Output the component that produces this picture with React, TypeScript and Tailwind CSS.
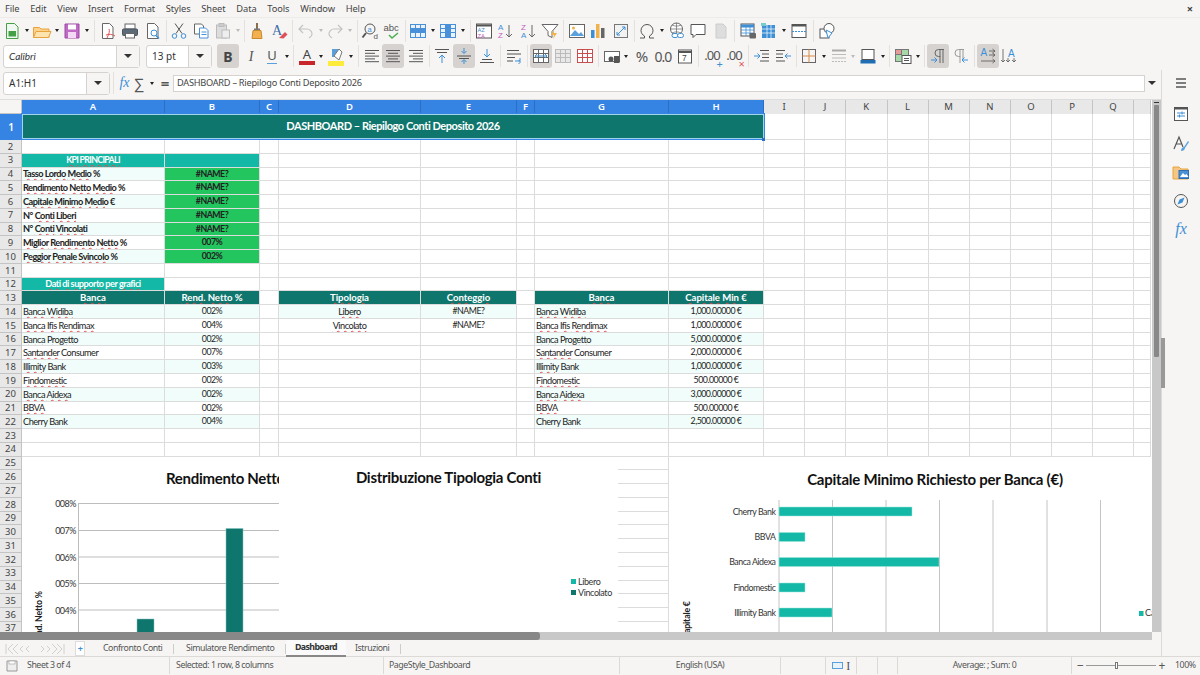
import type { ReactNode } from "react";

const rowGrid =
  "grid grid-cols-[22px_143px_95px_19px_142px_96px_18px_134px_95px_41px_41px_41.5px_41px_41px_41.5px_41px_41px_41px_17px]";

const SPELL = ["Tasso", "Lordo", "Medio", "Rendimento", "Netto", "Capitale", "Minimo", "Conti", "Liberi", "Vincolati", "Miglior", "Peggior", "Penale", "Svincolo", "Banca", "Widiba", "Ifis", "Rendimax", "Progetto", "Santander", "Illimity", "Findomestic", "Aidexa", "BBVA", "Libero", "Vincolato", "KPI", "PRINCIPALI", "Dati", "di", "supporto", "per", "grafici", "Tipologia", "Conteggio", "Rend.", "Min"];

// red squiggle under words the spell checker doesn't know
function Spell({ text }: { text: string }) {
  const words = text.split(" ");
  return (
    <span>
      {words.map((w, i) => (
        <span key={i}>
          {SPELL.includes(w) && text !== "Cherry Bank" ? (
            <span className="underline decoration-wavy decoration-[#e5484d] decoration-[0.6px] underline-offset-[1px]">{w}</span>
          ) : (
            w
          )}
          {i < words.length - 1 ? " " : ""}
        </span>
      ))}
    </span>
  );
}

type CellDef = { t?: string; cls?: string; trk?: string };

function Row({ n, cells = {} }: { n: number; cells?: Record<number, CellDef> }) {
  return (
    <div className={`${rowGrid} h-[13.77px]`}>
      <div className="flex items-center justify-center border-r border-b border-[#c4c4c4] bg-[#e8e8e8] text-[9.5px] leading-none text-[#444] font-['Noto_Sans',sans-serif]">{n}</div>
      {Array.from({ length: 18 }).map((_, i) => (
        <div key={i} className={`flex items-center overflow-hidden whitespace-nowrap border-r border-b border-[#dcdcdc] leading-none text-[#222] ${cells[i]?.trk ?? "text-[9.2px] tracking-[-0.5px]"} ${cells[i]?.cls ?? ""}`}>
          {cells[i]?.t ? <Spell text={cells[i].t as string} /> : null}
        </div>
      ))}
    </div>
  );
}

const kpi: [string, string][] = [
  ["Tasso Lordo Medio %", "#NAME?"],
  ["Rendimento Netto Medio %", "#NAME?"],
  ["Capitale Minimo Medio €", "#NAME?"],
  ["N° Conti Liberi", "#NAME?"],
  ["N° Conti Vincolati", "#NAME?"],
  ["Miglior Rendimento Netto %", "007%"],
  ["Peggior Penale Svincolo %", "002%"],
];

const banks: [string, string, string][] = [
  ["Banca Widiba", "002%", "1,000.00000 €"],
  ["Banca Ifis Rendimax", "004%", "1,000.00000 €"],
  ["Banca Progetto", "002%", "5,000.00000 €"],
  ["Santander Consumer", "007%", "2,000.00000 €"],
  ["Illimity Bank", "003%", "1,000.00000 €"],
  ["Findomestic", "002%", "500.00000 €"],
  ["Banca Aidexa", "002%", "3,000.00000 €"],
  ["BBVA", "002%", "500.00000 €"],
  ["Cherry Bank", "004%", "2,500.00000 €"],
];

const HEAD = "justify-center bg-[#0f766e] text-white font-bold border-[#5f9f99]";
const SUB = "justify-center bg-[#14b8a6] text-white font-bold border-[#5fcabc]";
const HEAD_TRK = "text-[9.6px] tracking-[-0.05px]";
const NUM_TRK = "text-[8.8px] tracking-[-0.5px]";

function rows() {
  const out: ReactNode[] = [];
  out.push(<Row key={2} n={2} />);
  out.push(<Row key={3} n={3} cells={{ 0: { t: "KPI PRINCIPALI", cls: SUB, trk: "text-[8.8px] tracking-[-0.7px]" }, 1: { cls: SUB } }} />);
  kpi.forEach(([a, b], i) => {
    const bg = i % 2 === 0 ? "bg-[#f0fdfa]" : "bg-white";
    out.push(
      <Row key={i + 4} n={i + 4} cells={{ 0: { t: a, cls: `pl-[1px] font-bold ${bg}` }, 1: { t: b, trk: NUM_TRK, cls: "justify-center bg-[#22c55e] font-bold border-[#4fd07e]" } }} />
    );
  });
  out.push(<Row key={11} n={11} />);
  out.push(<Row key={12} n={12} cells={{ 0: { t: "Dati di supporto per grafici", cls: SUB } }} />);
  out.push(
    <Row key={13} n={13} cells={{ 0: { t: "Banca", cls: HEAD, trk: HEAD_TRK }, 1: { t: "Rend. Netto %", cls: HEAD, trk: HEAD_TRK }, 3: { t: "Tipologia", cls: HEAD, trk: HEAD_TRK }, 4: { t: "Conteggio", cls: HEAD, trk: HEAD_TRK }, 6: { t: "Banca", cls: HEAD, trk: HEAD_TRK }, 7: { t: "Capitale Min €", cls: HEAD, trk: HEAD_TRK } }} />
  );
  banks.forEach(([name, rend, cap], i) => {
    const bg = i % 2 === 0 ? "bg-[#f0fdfa]" : "bg-white";
    const cells: Record<number, CellDef> = {
      0: { t: name, cls: `pl-[1px] ${bg}` },
      1: { t: rend, trk: NUM_TRK, cls: `justify-center ${bg}` },
      6: { t: name, cls: `pl-[1px] ${bg}` },
      7: { t: cap, trk: NUM_TRK, cls: `justify-center ${bg}` },
    };
    if (i < 2) {
      cells[3] = { t: i === 0 ? "Libero" : "Vincolato", cls: `justify-center ${bg}` };
      cells[4] = { t: "#NAME?", trk: NUM_TRK, cls: `justify-center ${bg}` };
    }
    out.push(<Row key={i + 14} n={i + 14} cells={cells} />);
  });
  for (let n = 23; n <= 38; n++) out.push(<Row key={n} n={n} />);
  return out;
}

function Ic({ children, w = 20 }: { children: ReactNode; w?: number }) {
  return (
    <svg width={w} height={20} viewBox={`0 0 ${w} 20`} fill="none" strokeWidth="1" stroke="#666">
      {children}
    </svg>
  );
}

function T({ children, on, className = "" }: { children: ReactNode; on?: boolean; className?: string }) {
  return (
    <div className={`flex h-[24px] w-[22px] shrink-0 items-center justify-center rounded-[3px] ${on ? "bg-[#d5d2cf]" : ""} ${className}`}>
      {children}
    </div>
  );
}

function Drop({ light, className = "" }: { light?: boolean; className?: string }) {
  return (
    <div className={`flex h-[24px] w-[8px] shrink-0 items-center justify-center ${className}`}>
      <div className={`h-0 w-0 border-x-[2.5px] border-t-[3px] border-x-transparent ${light ? "border-t-[#bbb]" : "border-t-[#222]"}`} />
    </div>
  );
}

function Sep({ className }: { className: string }) {
  return (
    <div className={`flex h-[22px] shrink-0 justify-center ${className}`}>
      <div className="h-full w-px bg-[#e3e1de]" />
    </div>
  );
}

function Lines({ kind }: { kind: "l" | "c" | "r" }) {
  return (
    <Ic>
      {[0, 1, 2, 3, 4].map((i) => {
        const l = i % 2 ? 10 : 14;
        const x = kind === "l" ? 3 : kind === "r" ? 17 - l : 10 - l / 2;
        return <path key={i} d={`M${x} ${4.5 + i * 2.8}h${l}`} stroke="#555" />;
      })}
    </Ic>
  );
}

function TableIc({ c = "#4a90d9", fill = "#fff", x }: { c?: string; fill?: string; x?: ReactNode }) {
  return (
    <Ic>
      <rect x="2.5" y="3.5" width="15" height="13" fill={fill} stroke={c} />
      <path d="M2.5 7.5h15M2.5 11.5h15M7.5 3.5v13M12.5 3.5v13" stroke={c} />
      {x}
    </Ic>
  );
}

function Toolbar1() {
  return (
    <div className="flex h-[25px] items-center pl-[1px]">
      <T><Ic><path d="M4.5 2.5h8l3.5 3.5v11.5h-11.5z" fill="#f1f8f1" stroke="#43a047" /><rect x="6.5" y="10" width="7.5" height="5.5" fill="#43a047" stroke="none" /></Ic></T>
      <Drop />
      <T><Ic><path d="M1.5 6.5h6l1.5 1.5h8v8.5h-15.5z" fill="#fbd38d" stroke="#e8a33d" /><path d="M1.5 16.5l2.5-6h15l-2.5 6z" fill="#fde3ae" stroke="#e8a33d" /></Ic></T>
      <Drop />
      <T><Ic><path d="M3 3h14v14h-14z" fill="#bf6bc4" stroke="#9c4aa3" /><rect x="6" y="3.5" width="8" height="5" fill="#fff" stroke="none" /><rect x="6" y="11" width="8" height="6" fill="#f3d9f5" stroke="none" /></Ic></T>
      <Drop />
      <Sep className="w-[6px]" />
      <T><Ic><path d="M4.5 2.5h7l3.5 3.5v11.5h-10.5z" fill="#fff" stroke="#666" /><path d="M9 17c2-4 3-7 2-9M8 14c3-1 6-1 9 1" stroke="#e05555" /></Ic></T>
      <T><Ic><rect x="5" y="3" width="10" height="5" fill="#fff" /><rect x="2.5" y="8" width="15" height="6.5" rx="1" fill="#5d6b78" stroke="#4a5560" /><rect x="5.5" y="12.5" width="9" height="4.5" fill="#fff" /></Ic></T>
      <T className="ml-px"><Ic><path d="M4.5 2.5h7l3.5 3.5v11.5h-10.5z" fill="#fff" stroke="#666" /><circle cx="11" cy="12" r="3" fill="#fff" stroke="#3d8fd6" /><path d="M13 14.5l3 3" stroke="#3d8fd6" strokeWidth="1.5" /></Ic></T>
      <Sep className="w-[4px]" />
      <T><Ic><path d="M6 2.5l7 10M14 2.5l-7 10" stroke="#555" /><circle cx="5.5" cy="15" r="2.3" stroke="#3d8fd6" /><circle cx="14.5" cy="15" r="2.3" stroke="#3d8fd6" /></Ic></T>
      <T><Ic><path d="M3.5 3h7l2 2v8h-9z" fill="#fff" stroke="#666" /><path d="M8.5 7h6l2.5 2.5v7.5h-8.5z" fill="#fff" stroke="#4a90d9" /><path d="M10.5 11h5M10.5 13.5h5" stroke="#4a90d9" /></Ic></T>
      <T><Ic><rect x="3.5" y="4" width="10" height="13" fill="#ddd" stroke="#bbb" /><rect x="6" y="2.5" width="5" height="3" fill="#ccc" stroke="#bbb" /><rect x="9" y="9" width="7.5" height="8" fill="#eee" stroke="#bbb" /></Ic></T>
      <Drop light />
      <Sep className="w-[4px]" />
      <T><Ic><path d="M10 2v6" stroke="#8a6d4b" strokeWidth="2" /><rect x="7" y="7.5" width="6" height="2" fill="#777" stroke="none" /><path d="M6 9.5h8l1 8h-10z" fill="#f2b04e" stroke="#c98a2e" /></Ic></T>
      <T><Ic><text x="3" y="14" fontSize="14" fill="#3c6ea8" stroke="none" fontFamily="Liberation Serif">A</text><path d="M10 17l6-6 2.5 2.5-4 4z" fill="#e0505a" stroke="none" /></Ic></T>
      <Sep className="w-[5px]" />
      <T><Ic><path d="M7 4L3 8l4 4M3 8h8c3 0 5 2.5 5 5s-1.5 3-3 4" stroke="#c4c4c4" strokeWidth="1.2" /></Ic></T>
      <Drop light />
      <T className="-ml-px"><Ic><path d="M13 4l4 4-4 4M17 8H9c-3 0-5 2.5-5 5s1.5 3 3 4" stroke="#c4c4c4" strokeWidth="1.2" /></Ic></T>
      <Drop light />
      <Sep className="w-[6px]" />
      <T><Ic><circle cx="9" cy="8" r="5" stroke="#555" /><path d="M5 12l-3.5 4.5" stroke="#555" strokeWidth="2" /><text x="6.5" y="10.5" fontSize="7.5" fill="#3d8fd6" stroke="none" fontFamily="Liberation Sans">a</text><text x="12.5" y="18" fontSize="8" fill="#555" stroke="none" fontFamily="Liberation Sans">d</text></Ic></T>
      <T><Ic><text x="0.5" y="10" fontSize="9.5" fill="#555" stroke="none" fontFamily="Liberation Sans">abc</text><path d="M6 14l3 3 6-5" stroke="#4caf50" strokeWidth="1.5" /></Ic></T>
      <Sep className="w-[3px]" />
      <T><TableIc fill="#eaf3fb" x={<rect x="2.5" y="7.5" width="15" height="4" fill="#4a90d9" stroke="none" />} /></T>
      <Drop />
      <T><TableIc fill="#eaf3fb" x={<rect x="7.5" y="3.5" width="5" height="13" fill="#4a90d9" stroke="none" />} /></T>
      <Drop />
      <Sep className="w-[6px]" />
      <T><Ic><rect x="2.5" y="3" width="15" height="14" fill="#fff" stroke="#555" /><path d="M2.5 4.5h15" stroke="#555" strokeWidth="2" /><text x="3.5" y="11" fontSize="6" fill="#3d8fd6" stroke="none">AZ</text><text x="3.5" y="16.5" fontSize="6" fill="#c060c0" stroke="none">ZA</text></Ic></T>
      <T className="-ml-px"><Ic><text x="3" y="9" fontSize="8" fill="#3d8fd6" stroke="none" fontFamily="Liberation Sans">A</text><text x="3" y="17" fontSize="8" fill="#c060c0" stroke="none" fontFamily="Liberation Sans">Z</text><path d="M14 4v12M11 13l3 3 3-3" stroke="#666" /></Ic></T>
      <T className="ml-px"><Ic><text x="3" y="9" fontSize="8" fill="#c060c0" stroke="none" fontFamily="Liberation Sans">Z</text><text x="3" y="17" fontSize="8" fill="#3d8fd6" stroke="none" fontFamily="Liberation Sans">A</text><path d="M14 4v12M11 13l3 3 3-3" stroke="#666" /></Ic></T>
      <T><Ic><path d="M2 3.5h16l-6 7v6l-4-2v-4z" fill="#fff" stroke="#666" /><path d="M14 9l-3 5h3l-1 4 4-6h-3z" fill="#f0b24a" stroke="none" /></Ic></T>
      <Sep className="w-[5px]" />
      <T><Ic><rect x="2.5" y="3.5" width="15" height="13" fill="#fff" stroke="#666" /><path d="M3 15l5-6 4 4 2-2 3 4z" fill="#5aa0dc" stroke="none" /><circle cx="6.5" cy="7" r="1.5" fill="#f0b24a" stroke="none" /></Ic></T>
      <T className="-ml-px"><Ic><rect x="3" y="9" width="3.5" height="8" fill="#3d8fd6" stroke="none" /><rect x="8" y="3" width="3.5" height="14" fill="#f0b24a" stroke="none" /><rect x="13" y="7" width="3.5" height="10" fill="#666" stroke="none" /></Ic></T>
      <T className="ml-px"><Ic><rect x="3.5" y="3.5" width="13" height="13" fill="#f2f2f2" stroke="#777" /><path d="M6 14l8-8M11 6h3v3M6 11v3h3" stroke="#3d8fd6" /></Ic></T>
      <Sep className="w-[4px]" />
      <T><Ic><path d="M3 17h4.5v-2c-2-1-3.500-3-3.500-5.500a6 6 0 0 1 12 0c0 2.500-1.500 4.500-3.500 5.500v2H17" stroke="#555" /></Ic></T>
      <Drop />
      <T><Ic><circle cx="9.5" cy="8" r="6" fill="#fff" stroke="#666" /><path d="M3.5 8h12M9.5 2v12M5 4c3 1.5 6 1.5 9 0M5 12c3-1.5 6-1.5 9 0" stroke="#666" strokeWidth=".7" /><rect x="5" y="12.5" width="6" height="4" rx="2" fill="#fff" stroke="#3d8fd6" /><rect x="10.5" y="12.5" width="6" height="4" rx="2" fill="#fff" stroke="#3d8fd6" /></Ic></T>
      <T className="-ml-px"><Ic><path d="M3 3.5h14v10H8l-3 3v-3H3z" fill="#fff" stroke="#555" /></Ic></T>
      <T className="ml-px"><Ic><path d="M5 3h7l3 3v11H5z" fill="#ddd" stroke="#ccc" /></Ic></T>
      <Sep className="w-[5px]" />
      <T><Ic><rect x="3" y="3" width="13" height="12" fill="#fff" stroke="#555" /><path d="M3 5h13" stroke="#3d8fd6" strokeWidth="3" /><path d="M3 9h13M3 12h13M8 5v10M12 5v10" stroke="#3d8fd6" strokeWidth=".8" /><rect x="11.5" y="12" width="6.5" height="5.5" rx="1" fill="#666" stroke="none" /></Ic></T>
      <T className="-ml-px"><Ic><rect x="3" y="4" width="13" height="13" fill="#3d8fd6" stroke="none" /><path d="M3 8h13M3 12h13M8 4v13M12 4v13" stroke="#fff" strokeWidth=".7" /><rect x="2" y="2" width="5" height="3" fill="#7cc" stroke="none" /></Ic></T>
      <Drop />
      <T><Ic><rect x="3" y="3.5" width="14" height="13" fill="#fff" stroke="#555" /><path d="M3 4.5h14" stroke="#555" strokeWidth="2" /><path d="M3 10.5h14" stroke="#3d8fd6" strokeDasharray="2 1" /></Ic></T>
      <Sep className="w-[6px]" />
      <T><Ic><rect x="3" y="8" width="9" height="9" fill="#fff" stroke="#555" /><circle cx="12" cy="7.5" r="5" fill="#fff" stroke="#555" /><path d="M9 9l6 3-4 5z" fill="#fff" stroke="#3d8fd6" /></Ic></T>
    </div>
  );
}

function Combo({ className, text, italic }: { className: string; text: string; italic?: boolean }) {
  return (
    <div className={`flex h-[23px] shrink-0 rounded-[3px] border border-[#d5d2cf] bg-white ${className}`}>
      <div className={`flex-1 pl-[5px] text-[10px] leading-[21px] text-[#333] ${italic ? "italic font-['Lato',sans-serif]" : ""}`}>{text}</div>
      <div className="flex w-[23px] items-center justify-center border-l border-[#d5d2cf] bg-[#f6f5f4]">
        <div className="h-0 w-0 border-x-[4px] border-t-[4px] border-x-transparent border-t-[#333]" />
      </div>
    </div>
  );
}

function Toolbar2() {
  return (
    <div className="flex h-[26px] items-center pl-[3px]">
      <Combo className="w-[137px]" text="Calibri" italic />
      <Combo className="ml-[6px] w-[66px]" text="13 pt" />
      <T on className="ml-[5px]"><span className="text-[14px] font-bold text-[#444]">B</span></T>
      <T className="ml-px"><span className="text-[14px] italic text-[#555] font-['Liberation_Serif',serif]">I</span></T>
      <T className="-ml-px"><span className="border-b border-[#5aa0dc] text-[13px] leading-[15px] text-[#555]">U</span></T>
      <Drop />
      <Sep className="w-[5px]" />
      <T><div className="flex flex-col items-center leading-none"><span className="text-[13px] leading-[12px] text-[#444]">A</span><div className="mt-px h-[4px] w-[16px] bg-[#c9262c]" /></div></T>
      <Drop className="-ml-px" />
      <T><div className="flex flex-col items-center"><Ic w={16}><path d="M4 3h8v8H4z" fill="#5a9fd8" stroke="none" /><path d="M6 10l5-7 3 3-3 8z" fill="#fff" stroke="#777" /></Ic><div className="-mt-[5px] h-[5px] w-[16px] bg-[#ffeb3b]" /></div></T>
      <Drop />
      <Sep className="w-[6px]" />
      <T><Lines kind="l" /></T>
      <T on className="-ml-px"><Lines kind="c" /></T>
      <T className="ml-px"><Lines kind="r" /></T>
      <Sep className="w-[4px]" />
      <T><Ic><path d="M3 3.5h14M5 6.5h10" stroke="#555" /><path d="M10 17V9M7 12l3-3 3 3" stroke="#3d8fd6" /></Ic></T>
      <T on><Ic><path d="M3 10h14M5 12.5h10" stroke="#555" /><path d="M10 2v5M7.5 5l2.5 2.5L12.5 5M10 18v-4M7.5 16l2.5-2.5 2.5 2.5" stroke="#3d8fd6" /></Ic></T>
      <T className="ml-px"><Ic><path d="M3 16.5h14M5 13.5h10" stroke="#555" /><path d="M10 3v8M7 8l3 3 3-3" stroke="#3d8fd6" /></Ic></T>
      <Sep className="w-[5px]" />
      <T><Ic><path d="M3 4.5h12M3 8h14M3 11.5h8M3 15h6" stroke="#555" /><path d="M11 15h5v-3M14.5 14l2 2-2 2" stroke="#3d8fd6" /></Ic></T>
      <Sep className="w-[5px]" />
      <T on><TableIc c="#666" x={<path d="M4 10h12M6 8l-2 2 2 2M14 8l2 2-2 2" stroke="#3d8fd6" />} /></T>
      <T><TableIc c="#bbb" fill="#e8e8e8" /></T>
      <T><TableIc c="#c94f4f" /></T>
      <Sep className="w-[5px]" />
      <T><Ic><rect x="2.5" y="5.5" width="15" height="10" fill="#fff" stroke="#666" /><circle cx="9" cy="13" r="2.5" fill="#555" stroke="none" /><rect x="12" y="10" width="5.5" height="7" fill="#555" stroke="none" /></Ic></T>
      <Drop className="-ml-px" />
      <T className="ml-px"><span className="text-[15px] text-[#555]">%</span></T>
      <T className="-ml-px"><span className="text-[14px] tracking-[-1px] text-[#555]">0.0</span></T>
      <T><Ic><rect x="3.5" y="4" width="13" height="13" fill="#fff" stroke="#555" /><path d="M3.5 6h13" stroke="#555" strokeWidth="2" /><text x="7" y="15" fontSize="8.5" fill="#444" stroke="none" fontFamily="Liberation Sans">7</text></Ic></T>
      <Sep className="w-[5px]" />
      <T><span className="relative text-[13px] tracking-[-1px] text-[#555]">.00<span className="absolute -bottom-[3px] -right-[2px] text-[11px] leading-none text-[#3d8fd6]">+</span></span></T>
      <T><span className="relative text-[13px] tracking-[-1px] text-[#555]">.00<span className="absolute -bottom-[3px] -right-[2px] text-[11px] leading-none text-[#e05555]">×</span></span></T>
      <Sep className="w-[6px]" />
      <T><Ic><path d="M8 4.5h9M10 8h7M10 11.5h7M8 15h9" stroke="#555" /><path d="M2 10h6M5.5 7.5L8 10l-2.5 2.5" stroke="#3d8fd6" /></Ic></T>
      <T className="-ml-px"><Ic><path d="M3 4.5h9M3 8h7M3 11.5h7M3 15h9" stroke="#555" /><path d="M18 10h-6M14.5 7.5L12 10l2.5 2.5" stroke="#3d8fd6" /></Ic></T>
      <Sep className="w-[4px]" />
      <T><Ic><rect x="3.5" y="3.5" width="13" height="13" stroke="#666" /><path d="M3.5 10h13M10 3.5v13" stroke="#d98a4a" /></Ic></T>
      <Drop />
      <T><Ic><path d="M3 4.5h14" stroke="#aaa" strokeWidth="2" /><path d="M3 8.5h14M3 12h14" stroke="#bbb" /><path d="M3 15.5h14" stroke="#bbb" strokeDasharray="2 1" /></Ic></T>
      <Drop light className="-ml-px" />
      <T><Ic><rect x="4" y="3.5" width="12" height="10" fill="#fff" stroke="#555" /><rect x="2.5" y="14" width="15" height="3.5" fill="#1f6db3" stroke="none" /></Ic></T>
      <Drop />
      <Sep className="w-[5px]" />
      <T><Ic><rect x="2.5" y="3.5" width="13" height="12" fill="#a6d8a8" stroke="#777" /><rect x="2.5" y="3.5" width="6" height="5" fill="#e89a9a" stroke="#777" /><rect x="9" y="9.5" width="9" height="8" fill="#fff" stroke="#555" /><path d="M11 12.5h5M11 14.5h5" stroke="#555" /></Ic></T>
      <Drop />
      <Sep className="w-[5px]" />
      <T on><Ic><path d="M16 3.5H10.5a3.5 3.5 0 0 0 0 7H12V3.5M12 10v7M15 3.5V17" stroke="#666" /><path d="M3 14h6M6.5 11.5L9 14l-2.5 2.5" stroke="#3d8fd6" /></Ic></T>
      <T><Ic><path d="M14 3.5H8.5a3.5 3.5 0 0 0 0 7H10V3.5M10 10v7M13 3.5V13" stroke="#999" /><path d="M18 14h-6M14.5 11.5L12 14l2.5 2.5" stroke="#3d8fd6" /></Ic></T>
      <Sep className="w-[6px]" />
      <T on><Ic><text x="2.5" y="10" fontSize="10" fill="#3d8fd6" stroke="none" fontFamily="Liberation Sans">A</text><path d="M11 5h6M14.5 3l2.5 2-2.5 2M11 9h6M14.5 7l2.5 2-2.5 2M3 15h14M14.5 13l2.5 2-2.5 2" stroke="#555" strokeWidth=".8" /></Ic></T>
      <T className="-ml-px"><Ic><text x="9" y="11" fontSize="10" fill="#3d8fd6" stroke="none" fontFamily="Liberation Sans">A</text><path d="M4 3v13M2 14l2 2 2-2M9 12v4M7 14l2 2 2-2M15 12v4M13 14l2 2 2-2" stroke="#555" strokeWidth=".8" /></Ic></T>
    </div>
  );
}

function FormulaBar() {
  return (
    <div className="flex h-[26px] items-center pl-[3px] pr-[2px]">
      <Combo className="w-[107px]" text="A1:H1" />
      <Sep className="w-[7px]" />
      <span className="w-[15px] shrink-0 text-center text-[14px] italic leading-none text-[#3d8fd6] font-['Liberation_Serif',serif]">fx</span>
      <span className="w-[14px] shrink-0 text-center text-[15px] leading-none text-[#555]">∑</span>
      <Drop className="ml-[2px]" />
      <span className="ml-[2px] w-[14px] shrink-0 text-center text-[15px] font-bold leading-none text-[#555]">=</span>
      <div className="ml-px flex h-[17px] flex-1 items-center border border-[#d5d2cf] bg-white pl-[3px] text-[9.2px] tracking-[-0.25px] text-[#444]">DASHBOARD – Riepilogo Conti Deposito 2026</div>
      <div className="flex w-[14px] shrink-0 justify-center"><div className="h-0 w-0 border-x-[4px] border-t-[4px] border-x-transparent border-t-[#333]" /></div>
    </div>
  );
}

const cols = ["A", "B", "C", "D", "E", "F", "G", "H", "I", "J", "K", "L", "M", "N", "O", "P", "Q", ""];

const chartFont = "Lato, 'Liberation Sans', sans-serif";

function ChartRend() {
  return (
    <svg className="absolute left-[22px] top-[357px]" width="257" height="175" viewBox="22 457 257 175">
      <rect x="22" y="457" width="257" height="175" fill="#fff" />
      <text x="166" y="484" fontSize="15" letterSpacing="-0.3" fontWeight="700" fill="#111" fontFamily={chartFont}>Rendimento Netto</text>
      {[503.5, 530.5, 557, 583.5, 610].map((y) => (
        <path key={y} d={`M78.5 ${y}H279`} stroke="#bdbdbd" />
      ))}
      <path d="M78.5 503V632" stroke="#bdbdbd" />
      {["008%", "007%", "006%", "005%", "004%"].map((t, i) => (
        <text key={t} x="76" y={[507, 534, 560.5, 587, 613.5][i]} textAnchor="end" fontSize="9" letterSpacing="-0.5" fill="#333" fontFamily={chartFont}>{t}</text>
      ))}
      <rect x="137" y="619" width="17" height="14" fill="#0f766e" stroke="#7fc4bc" strokeWidth=".5" />
      <rect x="226" y="528.5" width="17" height="104" fill="#0f766e" stroke="#7fc4bc" strokeWidth=".5" />
      <text transform="translate(42 632) rotate(-90)" x="-13" fontSize="8.8" letterSpacing="-0.2" fontWeight="700" fill="#222" fontFamily={chartFont}>Rend. Netto %</text>
    </svg>
  );
}

function ChartDist() {
  return (
    <svg className="absolute left-[279px] top-[357px]" width="339" height="175" viewBox="279 457 339 175">
      <rect x="279" y="457" width="339" height="175" fill="#fff" />
      <text x="448.5" y="483" textAnchor="middle" fontSize="15" letterSpacing="-0.3" fontWeight="700" fill="#111" fontFamily={chartFont}>Distribuzione Tipologia Conti</text>
      <rect x="571" y="579" width="5" height="5" fill="#14b8a6" />
      <rect x="571" y="590" width="5" height="5" fill="#0f766e" />
      <text x="578" y="584.5" fontSize="9" letterSpacing="-0.4" fill="#333" fontFamily={chartFont}>Libero</text>
      <text x="578" y="595.5" fontSize="9" letterSpacing="-0.4" fill="#333" fontFamily={chartFont}>Vincolato</text>
    </svg>
  );
}

function ChartCap() {
  const bars: [string, number, number][] = [
    ["Cherry Bank", 511.5, 912],
    ["BBVA", 537, 805],
    ["Banca Aidexa", 562, 939],
    ["Findomestic", 587.5, 805],
    ["Illimity Bank", 612.5, 832],
  ];
  return (
    <svg className="absolute left-[669px] top-[357px]" width="483" height="175" viewBox="669 457 483 175">
      <rect x="669" y="457" width="483" height="175" fill="#fff" />
      <text x="935" y="484.5" textAnchor="middle" fontSize="15" letterSpacing="-0.25" fontWeight="700" fill="#111" fontFamily={chartFont}>Capitale Minimo Richiesto per Banca (€)</text>
      {[779, 832.5, 886, 939.5, 993, 1047, 1100.5].map((x) => (
        <path key={x} d={`M${x} 500V632`} stroke="#c4c4c4" />
      ))}
      {bars.map(([name, y, end]) => (
        <g key={name}>
          <rect x="779" y={y - 4.5} width={end - 779} height="9" fill="#14b8a6" stroke="#9be8dc" strokeWidth=".5" />
          <text x="775.5" y={y + 3} textAnchor="end" fontSize="8.8" letterSpacing="-0.45" fill="#333" fontFamily={chartFont}>{name}</text>
        </g>
      ))}
      <text transform="translate(690 632) rotate(-90)" fontSize="8.8" letterSpacing="-0.2" fontWeight="700" fill="#222" x="-1" fontFamily={chartFont}>apitale €</text>
      <rect x="1139" y="611" width="4.5" height="5" fill="#14b8a6" />
      <text x="1145" y="616" fontSize="9" fill="#333" fontFamily={chartFont}>Ca</text>
    </svg>
  );
}

function Sheet() {
  return (
    <div className="mt-[3px] flex h-[533px] border-t border-[#ddd]">
      <div className="relative w-[1152px] overflow-hidden bg-white font-['Lato',sans-serif]">
        <div className={`${rowGrid} h-[14px]`}>
          <div className="border-r border-b border-[#c4c4c4] bg-[#f6f5f4]" />
          {cols.map((c, i) => (
            <div key={i} className={`flex items-center justify-center border-r text-[9.5px] font-['Noto_Sans',sans-serif] ${i < 8 ? "border-[#2a6fc4] bg-[#3584e4] font-semibold text-white" : "border-[#c4c4c4] bg-[#e8e8e8] text-[#444]"}`}>{c}</div>
          ))}
        </div>
        <div className={`${rowGrid} h-[26px]`}>
          <div className="flex items-center justify-center bg-[#3584e4] text-[10px] font-semibold text-white font-['Noto_Sans',sans-serif]">1</div>
          <div className="col-span-8 mb-px flex items-center justify-center border border-[#9fd4ea] bg-[#0f766e] text-[11px] font-bold tracking-[-0.44px] text-white outline outline-1 outline-[#3584e4]">DASHBOARD – Riepilogo Conti Deposito 2026</div>
          {Array.from({ length: 10 }).map((_, i) => (
            <div key={i} className="border-r border-b border-[#dcdcdc]" />
          ))}
        </div>
        {rows()}
        <div className="absolute left-[762px] top-[38px] h-[3px] w-[3px] bg-[#2a6fc4]" />
        <ChartRend />
        <ChartDist />
        <ChartCap />
      </div>
      <div className="w-[9px] bg-[#c8c8c8] px-[2px] pt-[2px]">
        <div className="h-px w-[5px] bg-[#333]" />
        <div className="mt-[2px] h-[252px] w-[5px] rounded-[1px] bg-[#888]" />
      </div>
    </div>
  );
}

function Sidebar() {
  return (
    <div className="relative flex w-[39px] flex-col items-center border-l border-[#dcdad7] pt-[3px]">
      <div className="absolute -left-px top-[268px] h-[50px] w-[4px] bg-[#999]" />
      <svg width="20" height="20" viewBox="0 0 20 20"><path d="M5 6h10M5 10h10M5 14h10" stroke="#555" strokeWidth="1.3" /></svg>
      <svg width="20" height="20" viewBox="0 0 20 20" className="mt-[11px]"><rect x="3.5" y="3.5" width="13" height="13" fill="#fff" stroke="#555" /><path d="M3.5 4.5h13" stroke="#555" strokeWidth="2" /><path d="M6 9h8M6 12h8M11 7.5v3M8.5 10.5v3" stroke="#3d8fd6" /></svg>
      <svg width="20" height="20" viewBox="0 0 20 20" className="mt-[10px]"><path d="M3 15L8 3l4 10M5 10h6" stroke="#555" fill="none" strokeWidth="1.2" /><path d="M10 17c0-3 2-4 3-4l4-6 1 1-4 6c0 2-2 3-4 3z" fill="#5aa0dc" /></svg>
      <svg width="20" height="20" viewBox="0 0 20 20" className="mt-[8px]"><path d="M2 5h6l2 2h7v10H2z" fill="#f5c684" stroke="#e8a33d" /><rect x="8" y="8.5" width="9.5" height="8" fill="#4a90d9" stroke="#2f6fb0" /><path d="M9 15l3-4 2 2 1.5-1 2 3z" fill="#fff" /></svg>
      <svg width="20" height="20" viewBox="0 0 20 20" className="mt-[9px]"><circle cx="10" cy="10" r="6.5" fill="none" stroke="#555" /><path d="M13.5 6.5L11.5 11.5 6.5 13.5 8.5 8.5z" fill="#3d8fd6" /></svg>
      <span className="mt-[10px] text-[16px] italic leading-none text-[#3d8fd6] font-['Liberation_Serif',serif]">fx</span>
    </div>
  );
}

function TabBar() {
  return (
    <div className="flex h-[17px] items-center whitespace-nowrap text-[8.8px] tracking-[-0.45px] text-[#555]">
      <svg className="ml-[5px]" width="60" height="14" viewBox="0 0 60 14" fill="none" stroke="#d0d0d0">
        <path d="M1 2v10M8 2L3 7l5 5M13 2L8 7l5 5M18 4l-3 3 3 3M24 4l-3 3 3 3M36 4l3 3-3 3M42 4l3 3-3 3M47 2l5 5-5 5M52 2l5 5-5 5M59 2v10" />
      </svg>
      <div className="ml-[10px] flex h-[15px] w-[10px] items-center justify-center border border-[#ddd] bg-white text-[9px] font-bold leading-none text-[#3d8fd6]">+</div>
      <div className="ml-[18px] w-[58px]">Confronto Conti</div>
      <div className="ml-[12px] h-[10px] w-px bg-[#ccc]" />
      <div className="ml-[12px] w-[87px]">Simulatore Rendimento</div>
      <div className="ml-[12px] h-[10px] w-px bg-[#ccc]" />
      <div className="flex h-full w-[60px] items-center justify-center border-b-2 border-[#888] bg-[#fafafa] font-bold tracking-[-0.6px] text-[#333]">Dashboard</div>
      <div className="ml-[9px] w-[35px]">Istruzioni</div>
      <div className="ml-[10px] h-[10px] w-px bg-[#ccc]" />
    </div>
  );
}

function StatusCell({ className, children }: { className: string; children?: ReactNode }) {
  return <div className={`flex h-full shrink-0 items-center border-r border-[#dcdad7] ${className}`}>{children}</div>;
}

function StatusBar() {
  return (
    <div className="flex h-[18px] items-center border-t border-[#dcdad7] text-[8.8px] tracking-[-0.45px] text-[#555]">
      <StatusCell className="w-[170px] pl-[6px]">
        <svg width="12" height="12" viewBox="0 0 12 12"><path d="M1 1h10v10H1z" fill="#eee" stroke="#999" /><rect x="3" y="1" width="6" height="3" fill="#fff" stroke="#999" strokeWidth=".6" /></svg>
        <span className="ml-[9px]">Sheet 3 of 4</span>
      </StatusCell>
      <StatusCell className="w-[214px] pl-[6px]">Selected: 1 row, 8 columns</StatusCell>
      <StatusCell className="w-[236px] pl-[5px]">PageStyle_Dashboard</StatusCell>
      <StatusCell className="w-[161px] justify-center">English (USA)</StatusCell>
      <StatusCell className="w-[45px]" />
      <StatusCell className="w-[31px] justify-center gap-[3px]">
        <div className="h-[7px] w-[11px] border border-[#5aa0dc] bg-[#e8f2fb]" />
        <span className="text-[12px] leading-none text-[#555] font-['Liberation_Serif',serif]">I</span>
      </StatusCell>
      <StatusCell className="w-[21px]" />
      <StatusCell className="w-[20px]" />
      <StatusCell className="w-[174px] justify-center">Average: ; Sum: 0</StatusCell>
      <div className="ml-[5px] flex w-[88px] items-center gap-[3px]">
        <span className="text-[12px] leading-none">−</span>
        <div className="relative h-px flex-1 bg-[#999]"><div className="absolute -top-[3px] left-[29px] h-[7px] w-[3px] border border-[#777] bg-white" /></div>
        <span className="text-[12px] leading-none">+</span>
      </div>
      <span className="ml-[10px]">100%</span>
    </div>
  );
}

export default function App() {
  return (
    <div className="h-[675px] w-[1200px] overflow-hidden bg-[#f6f5f4] font-['Noto_Sans',sans-serif]">
      <div className="flex h-[17px] items-center justify-between pl-[5px] pr-[7px] text-[9.3px] tracking-[-0.1px] text-[#444]">
        <div className="flex gap-[10.8px]">
          {["File", "Edit", "View", "Insert", "Format", "Styles", "Sheet", "Data", "Tools", "Window", "Help"].map((m) => (
            <span key={m}>{m}</span>
          ))}
        </div>
        <span className="text-[11px] font-bold leading-none text-[#444]">×</span>
      </div>
      <div className="border-t border-[#ecebe9]">
        <Toolbar1 />
        <Toolbar2 />
      </div>
      <div className="mt-px flex h-[586px]">
        <div className="w-[1161px]">
          <FormulaBar />
          <Sheet />
          <div className="h-[8px] w-[1152px] bg-[#c8c8c8]">
            <div className="h-full w-[540px] rounded-r-[3px] bg-[#888]" />
          </div>
          <TabBar />
        </div>
        <Sidebar />
      </div>
      <StatusBar />
    </div>
  );
}
